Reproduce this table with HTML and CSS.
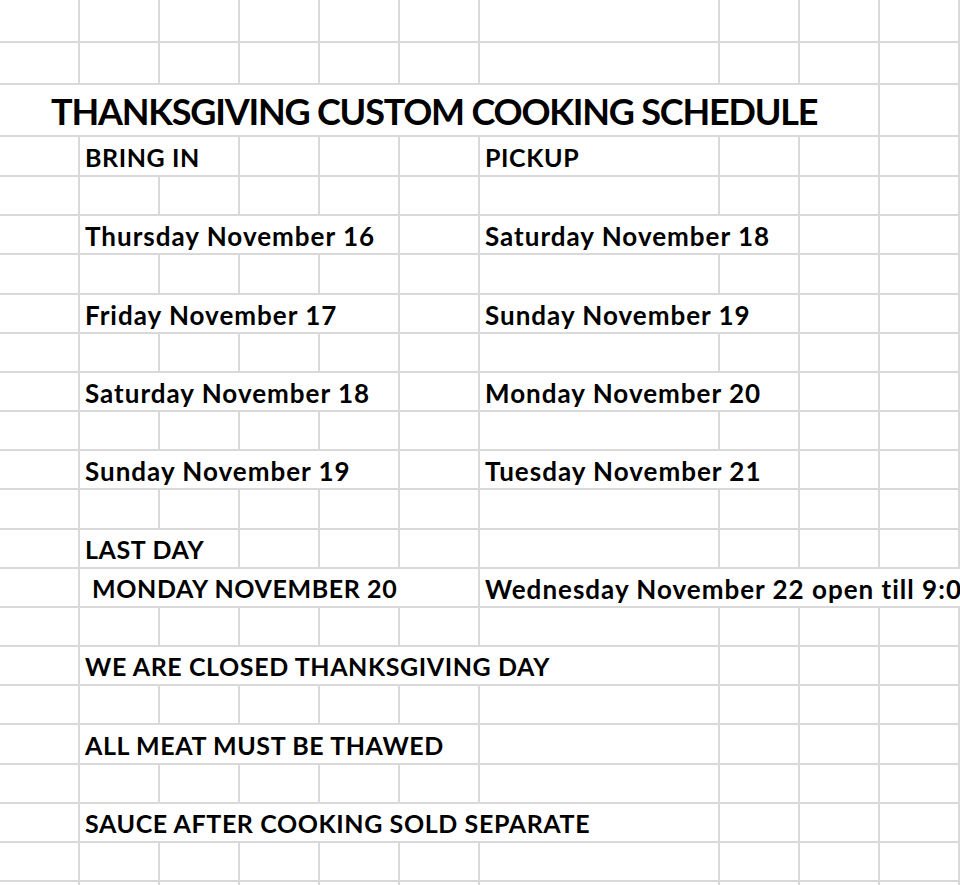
FILE: index.html
```html
<!DOCTYPE html>
<html lang="en">
<head>
<meta charset="utf-8">
<title>Thanksgiving Custom Cooking Schedule</title>
<link rel="stylesheet" href="styles.css">
</head>
<body>
<div class="sheet">
  <div class="row"></div>
  <div class="row"></div>
  <div class="row">
    <div class="cell title">THANKSGIVING CUSTOM COOKING SCHEDULE</div>
  </div>
  <div class="row">
    <div class="cell caps colB span2">BRING IN</div>
    <div class="cell caps colG span1">PICKUP</div>
  </div>
  <div class="row"></div>
  <div class="row">
    <div class="cell colB span4">Thursday November 16</div>
    <div class="cell colG span2">Saturday November 18</div>
  </div>
  <div class="row"></div>
  <div class="row">
    <div class="cell colB span4">Friday November 17</div>
    <div class="cell colG span2">Sunday November 19</div>
  </div>
  <div class="row"></div>
  <div class="row">
    <div class="cell colB span4">Saturday November 18</div>
    <div class="cell colG span2">Monday November 20</div>
  </div>
  <div class="row"></div>
  <div class="row">
    <div class="cell colB span4">Sunday November 19</div>
    <div class="cell colG span2">Tuesday November 21</div>
  </div>
  <div class="row"></div>
  <div class="row">
    <div class="cell caps colB span2">LAST DAY</div>
  </div>
  <div class="row">
    <div class="cell caps colB span5 indent">MONDAY NOVEMBER 20</div>
    <div class="cell colG open">Wednesday November 22 open till 9:00</div>
  </div>
  <div class="row"></div>
  <div class="row">
    <div class="cell caps colB span6">WE ARE CLOSED THANKSGIVING DAY</div>
  </div>
  <div class="row"></div>
  <div class="row">
    <div class="cell caps colB span5">ALL MEAT MUST BE THAWED</div>
  </div>
  <div class="row"></div>
  <div class="row">
    <div class="cell caps colB span6">SAUCE AFTER COOKING SOLD SEPARATE</div>
  </div>
  <div class="row"></div>
  <div class="row"></div>
</div>
</body>
</html>
```
FILE: styles.css
```css
html, body {
  margin: 0;
  padding: 0;
  background: #ffffff;
  overflow: hidden;
}

body {
  width: 960px;
  height: 885px;
  font-family: Lato, "Open Sans", "DejaVu Sans", sans-serif;
  font-weight: 700;
  color: #000000;
}

.sheet {
  --line: #d9d9d9;
  display: grid;
  grid-template-rows: 43px 42px 52px 40px 39px 39px 40px 39px 39px 39px 39px 39px 40px 39px 39px 39px 39px 39px 40px 39px 39px 39px 39px;
  width: 960px;
  height: 885px;
  overflow: hidden;
}

.row {
  display: grid;
  grid-template-columns: repeat(6, 80px) 240px repeat(3, 80px);
  box-sizing: border-box;
  border-bottom: 2px solid var(--line);
  overflow: hidden;
  background:
    linear-gradient(var(--line), var(--line)) 78px 0 / 2px 100% no-repeat,
    linear-gradient(var(--line), var(--line)) 158px 0 / 2px 100% no-repeat,
    linear-gradient(var(--line), var(--line)) 238px 0 / 2px 100% no-repeat,
    linear-gradient(var(--line), var(--line)) 318px 0 / 2px 100% no-repeat,
    linear-gradient(var(--line), var(--line)) 398px 0 / 2px 100% no-repeat,
    linear-gradient(var(--line), var(--line)) 478px 0 / 2px 100% no-repeat,
    linear-gradient(var(--line), var(--line)) 718px 0 / 2px 100% no-repeat,
    linear-gradient(var(--line), var(--line)) 798px 0 / 2px 100% no-repeat,
    linear-gradient(var(--line), var(--line)) 878px 0 / 2px 100% no-repeat,
    linear-gradient(var(--line), var(--line)) 958px 0 / 2px 100% no-repeat,
    #ffffff;
}

.cell {
  grid-row: 1;
  display: flex;
  align-items: flex-end;
  box-sizing: border-box;
  background: #ffffff;
  border-right: 2px solid var(--line);
  padding: 0 0 4px 5px;
  font-size: 26px;
  letter-spacing: 1px;
  line-height: 1;
  white-space: nowrap;
  overflow: hidden;
}

.caps {
  font-size: 25px;
  letter-spacing: 0.6px;
  padding-bottom: 5px;
}

.colB { grid-column-start: 2; }
.colG { grid-column-start: 7; }
.span1 { grid-column-end: span 1; }
.span2 { grid-column-end: span 2; }
.span4 { grid-column-end: span 4; }
.span5 { grid-column-end: span 5; }
.span6 { grid-column-end: span 6; }

.indent { padding-left: 12px; }

.open {
  grid-column-end: -1;
  border-right: 0;
}

.title {
  grid-column: 1 / span 9;
  padding: 0 0 6px 51px;
  font-size: 36px;
  letter-spacing: -1.2px;
}
```
